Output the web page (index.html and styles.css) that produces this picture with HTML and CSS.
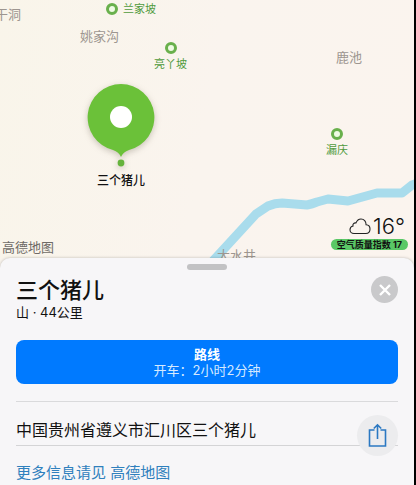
FILE: index.html
```html
<!DOCTYPE html>
<html lang="zh-CN">
<head>
    <meta charset="UTF-8">
    <meta name="viewport" content="width=device-width, initial-scale=1.0">
    <title>三个猪儿</title>
    <link rel="stylesheet" href="styles.css">
</head>
<body>

    <div class="map">
        <svg class="river" viewBox="0 0 414 258" preserveAspectRatio="xMinYMin slice" aria-hidden="true">
            <path d="M211 263 L256 214 L268 206 Q275 203 282 203 L307 205 Q312 204 317 202 L328 199 L348 201 L377 193 L402 193 L412 185 L418 183" fill="none" stroke="#a9dcec" stroke-width="9" stroke-linejoin="round"/>
        </svg>

        <span class="place place-gandong">干洞</span>
        <span class="place place-yaojiagou">姚家沟</span>
        <span class="place place-luchi">鹿池</span>
        <span class="place place-dashuijing">大水井</span>

        <div class="poi poi-side poi-lanjiapo"><i class="ring"></i><span>兰家坡</span></div>
        <div class="poi poi-liangyapo"><i class="ring"></i><span>亮丫坡</span></div>
        <div class="poi poi-louqing"><i class="ring"></i><span>漏庆</span></div>

        <div class="marker">
            <svg class="marker-pin" width="68" height="84" viewBox="0 0 68 84" aria-hidden="true">
                <path d="M34 1 A33.5 33.5 0 0 1 42 67 Q36 69 34 74 Q32 69 26 67 A33.5 33.5 0 0 1 34 1 Z" fill="#6bc139"/>
                <circle cx="34" cy="34" r="11" fill="#fff"/>
                <circle cx="34" cy="80" r="3.4" fill="#65b33c"/>
            </svg>
            <span class="marker-name">三个猪儿</span>
        </div>

        <span class="map-logo">高德地图</span>

        <div class="weather">
            <div class="weather-now">
                <svg width="22" height="17" viewBox="0 0 22 17" aria-hidden="true">
                    <path d="M5 15.5 C2.5 15.5 1 13.8 1 11.7 C1 9.7 2.4 8.3 4 8 C3.5 6 5 4.6 7 4.9 C8 2.3 9.8 1 12 1 C15 1 17.2 3.4 17.1 6.8 C19.6 7 21 8.9 21 11 C21 13.6 19.3 15.5 16.8 15.5 Z" fill="none" stroke="#222" stroke-width="1.1"/>
                </svg>
                <span>16°</span>
            </div>
            <div class="air">空气质量指数 17</div>
        </div>
    </div>

    <main class="sheet">
        <div class="handle"></div>

        <header class="sheet-header">
            <div>
                <h1>三个猪儿</h1>
                <p>山 · 44公里</p>
            </div>
            <button class="close" type="button" aria-label="关闭">
                <svg width="12" height="12" viewBox="0 0 12 12" aria-hidden="true">
                    <path d="M1 1 L11 11 M11 1 L1 11" stroke="#fff" stroke-width="2.4"/>
                </svg>
            </button>
        </header>

        <button class="route" type="button">
            <strong>路线</strong>
            <span>开车：2小时2分钟</span>
        </button>

        <div class="address">
            <span>中国贵州省遵义市汇川区三个猪儿</span>
            <button class="share" type="button" aria-label="共享">
                <svg width="19" height="25" viewBox="0 0 19 25" aria-hidden="true">
                    <path d="M6.5 7 H1.5 V23 H17.5 V7 H12.5 M9.5 16 V2 M5.8 5.5 L9.5 1.8 L13.2 5.5" fill="none" stroke="#2b78c2" stroke-width="1.6"/>
                </svg>
            </button>
        </div>

        <a class="more" href="#">更多信息请见 高德地图</a>
    </main>

</body>
</html>
```

FILE: styles.css
```css
* { box-sizing: border-box; }
body {
    display: flex;
    flex-direction: column;
    min-height: 100vh;
    margin: 0;
    border-right: 2px solid #000;
    background-color: #f9f4ed;
    font-family: "Inter", "Noto Sans CJK SC", sans-serif;
    color: #111;
}
h1, p { margin: 0; }
button {
    border: 0;
    padding: 0;
    font-family: inherit;
}

/* Map */
.map {
    position: relative;
    height: 258px;
    overflow: hidden;
    background: linear-gradient(100deg, #f9f5ea, #faf4ee 50%, #fbf4ee);
}
.river {
    display: block;
    width: 100%;
    height: 100%;
}
.place {
    position: absolute;
    font-size: 13px;
    line-height: 16px;
    color: #9d9690;
    white-space: nowrap;
}
.place-gandong { left: -5px; top: 6px; }
.place-yaojiagou { left: 80px; top: 28px; }
.place-luchi { left: 336px; top: 49px; }
.place-dashuijing { left: 217px; top: 247px; }

.poi {
    position: absolute;
    display: flex;
    flex-direction: column;
    align-items: center;
    gap: 2px;
    font-size: 11px;
    line-height: 16px;
    color: #4f9a3c;
    white-space: nowrap;
}
.poi-side {
    flex-direction: row;
    gap: 5px;
}
.ring {
    width: 12px;
    height: 12px;
    border: 3px solid #69b04c;
    border-radius: 50%;
    background-color: #effbe4;
}
.poi-lanjiapo { left: 106px; top: 1px; }
.poi-liangyapo { left: 154px; top: 42px; }
.poi-louqing { left: 326px; top: 128px; }

.marker {
    position: absolute;
    left: 87px;
    top: 83px;
    display: flex;
    flex-direction: column;
    align-items: center;
    gap: 6px;
}
.marker-pin {
    overflow: visible;
    filter: drop-shadow(0 2px 3px rgba(90, 80, 60, 0.3));
}
.marker-name {
    font-size: 12px;
    font-weight: 500;
    line-height: 16px;
}
.map-logo {
    position: absolute;
    left: 2px;
    bottom: 3px;
    font-size: 13px;
    line-height: 16px;
    color: #6e6a66;
}

.weather {
    position: absolute;
    right: 6px;
    bottom: 8px;
    display: flex;
    flex-direction: column;
    align-items: flex-end;
}
.weather-now {
    display: flex;
    align-items: center;
    gap: 2px;
    padding-right: 3px;
    font-family: "Inter", sans-serif;
    font-size: 22px;
    font-weight: 300;
    line-height: 26px;
}
.air {
    padding: 0 6px;
    border-radius: 6px;
    background-color: #5ac866;
    font-size: 9px;
    font-weight: 700;
    line-height: 11px;
}

/* Bottom sheet */
.sheet {
    position: relative;
    flex: 1;
    padding: 6px 16px 0;
    border-radius: 10px 10px 0 0;
    background-color: #f7f6f8;
    box-shadow: 0 0 3px rgba(0, 0, 0, 0.25);
}
.handle {
    width: 40px;
    height: 6px;
    margin: 0 auto;
    border-radius: 3px;
    background-color: #c2c2c4;
}
.sheet-header {
    display: flex;
    justify-content: space-between;
    align-items: flex-start;
    padding-top: 6px;
}
h1 {
    font-size: 22px;
    font-weight: 500;
    line-height: 28px;
}
.sheet-header p {
    font-size: 13px;
    line-height: 16px;
}
.close {
    display: flex;
    align-items: center;
    justify-content: center;
    width: 27px;
    height: 27px;
    border-radius: 50%;
    background-color: #c9c9cb;
}
.route {
    display: flex;
    flex-direction: column;
    align-items: center;
    justify-content: center;
    width: 100%;
    height: 44px;
    margin: 20px 0 17px;
    border-radius: 8px;
    background-color: #007aff;
    color: #d6eaff;
    font-size: 13px;
    line-height: 16px;
}
.route strong {
    font-size: 13px;
    color: #fff;
}
.address {
    display: flex;
    align-items: center;
    justify-content: space-between;
    height: 45px;
    padding-top: 11px;
    border-top: 1px solid #dadadc;
    border-bottom: 1px solid #d4d4d6;
    font-size: 16px;
}
.share {
    display: flex;
    align-items: center;
    justify-content: center;
    width: 41px;
    height: 41px;
    margin-top: 12px;
    border-radius: 50%;
    background-color: #ececee;
}
.more {
    display: block;
    padding-top: 16px;
    font-size: 15px;
    line-height: 22px;
    color: #2f80bd;
    text-decoration: none;
}
```
